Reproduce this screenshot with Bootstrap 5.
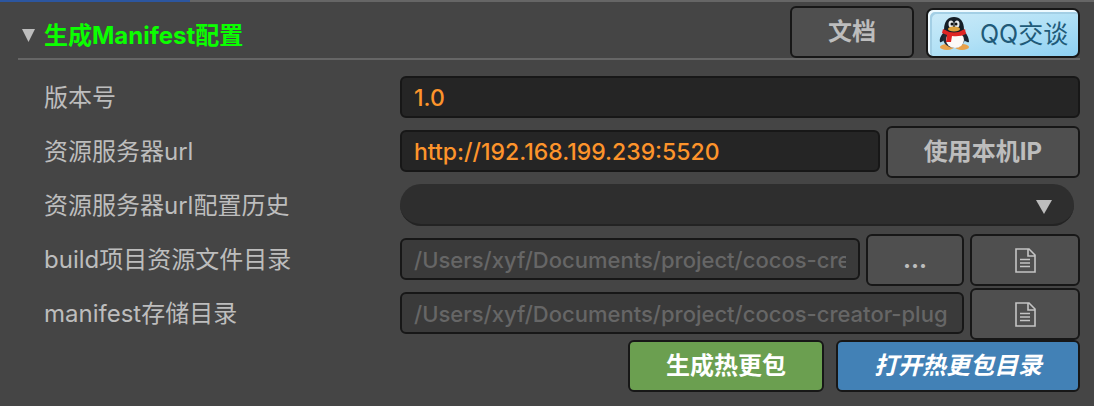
<!DOCTYPE html>
<html lang="zh-CN">
<head>
<meta charset="utf-8">
<meta name="viewport" content="width=device-width, initial-scale=1">
<title>生成Manifest配置</title>
<link href="https://cdn.jsdelivr.net/npm/bootstrap@5.3.0/dist/css/bootstrap.min.css" rel="stylesheet">
<style>
  body { background: #454545; color: #bdbdbd; font: 24px/36px Inter, "Noto Sans CJK SC", sans-serif; }
  .load-track { height: 2px; background: #666; }
  .load-bar { height: 2px; background: #2c56a0; }
  .panel { padding: 0 14px 14px 18px; }
  .panel-head { height: 58px; border-bottom: 2px solid #666; }
  .panel-title { font-size: 24px; line-height: 36px; padding-top: 12px; color: #0bff00; }
  .toggle { width: 26px; padding: 10px 0 0 4px; line-height: 0; }
  .head-actions, .foot-actions { gap: 12px; }
  .panel-body { padding-top: 10px; }
  .prop { height: 54px; gap: 6px; }
  .prop-label { width: 376px; padding-left: 26px; line-height: 52px; }
  .form-control, .form-select { height: 42px; margin-bottom: 6px; }
  .field { min-width: 0; padding: 2px 12px 0; border: 2px solid #171717; border-radius: 6px; background: #252525; color: #fd942b; font-size: 23px; font-weight: 500; line-height: 36px; }
  .field:focus { background: #252525; color: #fd942b; }
  .field:disabled { background: #3a3a3a; color: #666; font-size: 22px; }
  .pick-wrap { margin-right: 6px; }
  .pick { border: 0; border-bottom: 2px solid #232323; border-radius: 21px; color: #bdbdbd; background: #2e2e2e; }
  .pick-arrow { right: 22px; top: 16px; }
  .tool-btn { height: 52px; padding: 0; border: 2px solid #171717; border-radius: 6px; background: #4f4f4f; color: #bdbdbd; font-size: 24px; line-height: 36px; font-weight: 700; }
  .w-doc { width: 124px; }
  .w-ip { width: 194px; }
  .w-dots { width: 98px; }
  .w-file { width: 110px; }
  .w-make { width: 196px; }
  .w-open { width: 244px; }
  .tool-btn.make { background: #6b9f50; color: #fff; }
  .tool-btn.open-dir { background: #4281b6; color: #fff; }
  .tool-btn.qq { width: 154px; height: 50px; gap: 10px; padding: 2px 0 0 10px; border-radius: 7px; color: #205a78; font-size: 25px; font-weight: 400;
    background: linear-gradient(165deg, #cdebf8, #b2e1f6 50%, #8dd0f2); box-shadow: inset 2px 2px #eefaff, inset 4px 4px #a3cfe5; }
</style>
</head>
<body>
<svg class="d-none">
  <symbol id="file-icon" viewBox="0 0 21 25">
    <path d="M1 1H14L20 7V24H1ZM13 1V8H20M5 11.500H15M5 15H15M5 18.500H15" fill="none" stroke="#c4c4c4" stroke-width="1.600"/>
  </symbol>
</svg>
<div class="load-track"><div class="load-bar" style="width:17.4%"></div></div>
<main class="panel">
  <header class="panel-head d-flex">
    <button type="button" class="toggle btn border-0 text-start" aria-label="折叠">
      <svg width="13" height="13" viewBox="0 0 13 13"><path d="M0 0H13L6.500 13Z" fill="#bdbdbd"/></svg>
    </button>
    <h1 class="panel-title fw-bold m-0 align-self-center me-auto">生成Manifest配置</h1>
    <div class="head-actions d-flex align-items-end">
      <button type="button" class="btn tool-btn w-doc">文档</button>
      <button type="button" class="btn tool-btn qq d-flex align-items-center">
        <svg width="32" height="34" viewBox="0 0 32 34">
          <ellipse cx="9" cy="30" rx="7" ry="3" fill="#e9a14a"/><ellipse cx="24" cy="30" rx="7" ry="3" fill="#e9a14a"/>
          <path d="M7 14C4 17 1 21 2 25Q4 26 7 22L25 22Q28 26 31 25C31 20 28 16 26 14Z" fill="#172331"/>
          <ellipse cx="16" cy="21" rx="11" ry="10" fill="#222832"/>
          <ellipse cx="17" cy="23" rx="9" ry="8" fill="#fcf9f8"/>
          <path d="M6 13C6 4 10 0 16 0S26 4 26 13Q16 20 6 13Z" fill="#151d26"/>
          <ellipse cx="13" cy="7" rx="2.500" ry="3.500" fill="#e8ecee"/><ellipse cx="19" cy="7" rx="2.500" ry="3.500" fill="#e8ecee"/>
          <circle cx="14" cy="7" r="1.500" fill="#111"/><circle cx="18" cy="7" r="1.500" fill="#111"/>
          <ellipse cx="16" cy="12" rx="6" ry="2.500" fill="#dfa23c"/>
          <path d="M5 12Q16 19 27 12L28 17Q22 20 14 19L13 25H8L9 18L4 16Z" fill="#df2424"/>
        </svg>QQ交谈
      </button>
    </div>
  </header>

  <form class="panel-body">
    <div class="prop d-flex align-items-end">
      <label class="prop-label flex-shrink-0" for="ver">版本号</label>
      <input class="form-control field" id="ver" type="text" value="1.0">
    </div>
    <div class="prop d-flex align-items-end">
      <label class="prop-label flex-shrink-0" for="url">资源服务器url</label>
      <input class="form-control field" id="url" type="text" value="http://192.168.199.239:5520">
      <button type="button" class="btn tool-btn w-ip flex-shrink-0">使用本机IP</button>
    </div>
    <div class="prop d-flex align-items-end">
      <label class="prop-label flex-shrink-0" for="hist">资源服务器url配置历史</label>
      <div class="pick-wrap position-relative flex-grow-1">
        <select class="form-select pick" id="hist"><option></option></select>
        <svg class="pick-arrow position-absolute pe-none" width="16" height="14" viewBox="0 0 16 14"><path d="M0 0H16L8 14Z" fill="#bdbdbd"/></svg>
      </div>
    </div>
    <div class="prop d-flex align-items-end">
      <label class="prop-label flex-shrink-0" for="build">build项目资源文件目录</label>
      <input class="form-control field" id="build" type="text" value="/Users/xyf/Documents/project/cocos-creator-plug" disabled>
      <button type="button" class="btn tool-btn w-dots flex-shrink-0">...</button>
      <button type="button" class="btn tool-btn w-file flex-shrink-0 d-flex align-items-center justify-content-center" aria-label="打开目录">
        <svg width="21" height="25"><use href="#file-icon"/></svg>
      </button>
    </div>
    <div class="prop d-flex align-items-end">
      <label class="prop-label flex-shrink-0" for="mani">manifest存储目录</label>
      <input class="form-control field" id="mani" type="text" value="/Users/xyf/Documents/project/cocos-creator-plug" disabled>
      <button type="button" class="btn tool-btn w-file flex-shrink-0 d-flex align-items-center justify-content-center" aria-label="打开目录">
        <svg width="21" height="25"><use href="#file-icon"/></svg>
      </button>
    </div>
    <div class="foot-actions d-flex justify-content-end">
      <button type="button" class="btn tool-btn make w-make">生成热更包</button>
      <button type="button" class="btn tool-btn open-dir w-open fst-italic">打开热更包目录</button>
    </div>
  </form>
</main>
<script src="https://cdn.jsdelivr.net/npm/bootstrap@5.3.0/dist/js/bootstrap.bundle.min.js"></script>
</body>
</html>
